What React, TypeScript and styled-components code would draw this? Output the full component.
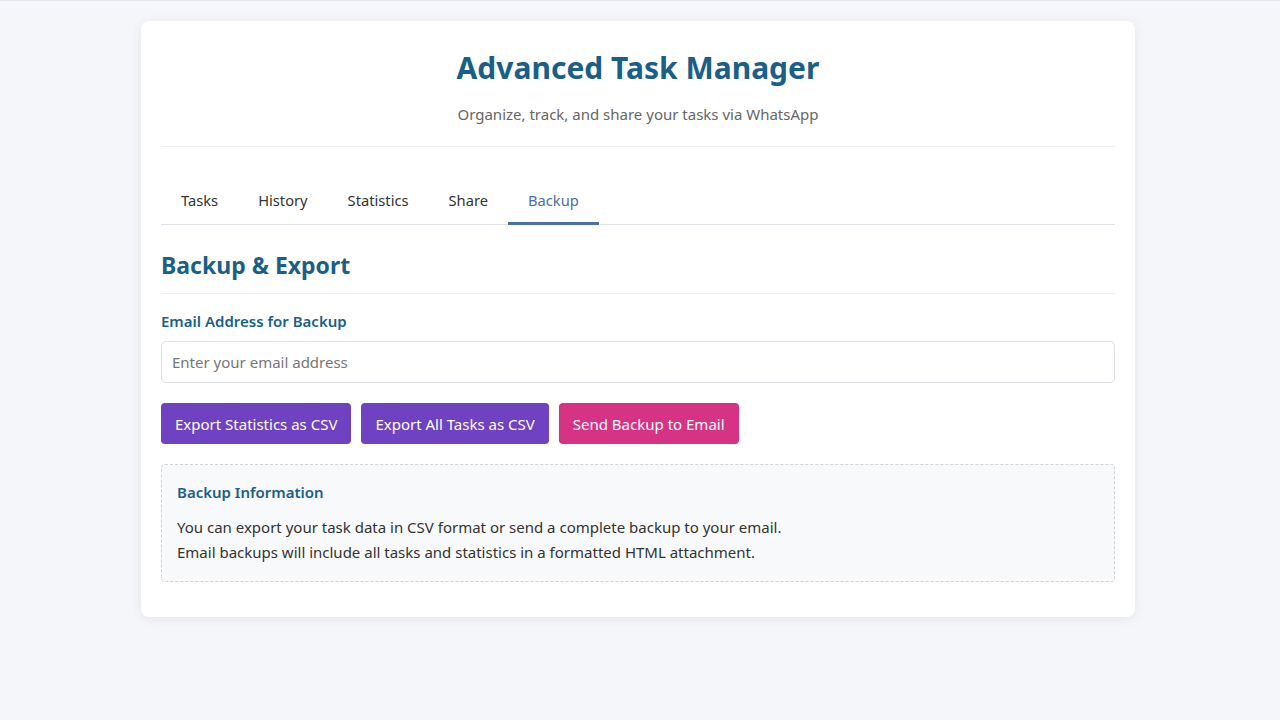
import React from 'react';
import styled, { createGlobalStyle } from 'styled-components';

const GlobalStyle = createGlobalStyle`
  * { box-sizing: border-box; }
  body {
    margin: 0;
    background: #f4f6fa;
    border-top: 1px solid #e2e5ec;
    font-family: "Noto Sans", "Open Sans", sans-serif;
    color: #333;
  }
`;

const Page = styled.div`
  padding: 20px 0 40px;
`;

const Card = styled.main`
  width: 994px;
  margin: 0 auto;
  transform: translateX(-2px);
  background: #fff;
  border-radius: 8px;
  box-shadow: 0 2px 12px rgba(0, 0, 0, 0.07);
  padding: 20px 20px 35px;
`;

const Header = styled.header`
  text-align: center;
  padding: 7px 0 22px;
  border-bottom: 1px solid #eceef1;
`;

const Title = styled.h1`
  margin: 0;
  font-size: 30px;
  font-weight: 700;
  color: #1a5f88;
  line-height: 1.3;
`;

const Subtitle = styled.p`
  margin: 17px 0 0;
  font-size: 15px;
  color: #666;
`;

const TabBar = styled.nav`
  display: flex;
  margin-top: 31px;
  border-bottom: 1px solid #dfe2e6;
`;

const Tab = styled.button<{ $active?: boolean }>`
  background: none;
  border: 0;
  border-bottom: 3px solid ${p => (p.$active ? '#4a6fa5' : 'transparent')};
  margin-bottom: -1px;
  padding: 12px 20px 12px;
  font-family: inherit;
  font-size: 14.7px;
  color: ${p => (p.$active ? '#4a6fa5' : '#333')};
  cursor: pointer;
`;

const SectionTitle = styled.h2`
  margin: 24px 0 0;
  padding-bottom: 12px;
  border-bottom: 1px solid #eceef1;
  font-size: 23px;
  font-weight: 700;
  color: #1a5f88;
`;

const Field = styled.div`
  margin-top: 17px;
  display: flex;
  flex-direction: column;
  gap: 10px;
`;

const Label = styled.label`
  font-size: 15px;
  font-weight: 600;
  color: #1a5f88;
`;

const Input = styled.input`
  height: 42px;
  padding: 0 10px;
  border: 1px solid #dcdfe3;
  border-radius: 5px;
  font-family: inherit;
  font-size: 15px;
  color: #333;
  &::placeholder { color: #777; }
`;

const Actions = styled.div`
  display: flex;
  gap: 10px;
  margin-top: 20px;
`;

const Button = styled.button<{ $tone: 'purple' | 'pink' }>`
  height: 41px;
  padding: 0 14px;
  border: 0;
  border-radius: 4px;
  background: ${p => (p.$tone === 'pink' ? '#d63384' : '#6f42c1')};
  color: #fff;
  font-family: inherit;
  font-size: 15px;
  cursor: pointer;
`;

const InfoBox = styled.section`
  margin-top: 20px;
  padding: 17px 15px 16px;
  background: #f8f9fa;
  border: 1px dashed #d0d3d8;
  border-radius: 4px;
`;

const InfoTitle = styled.h3`
  margin: 0 0 13px;
  font-size: 15px;
  font-weight: 600;
  color: #1a5f88;
`;

const InfoText = styled.p`
  margin: 0;
  font-size: 15px;
  line-height: 25px;
  color: #333;
`;

export default function App() {
  const tabs = ['Tasks', 'History', 'Statistics', 'Share', 'Backup'];
  return (
    <Page>
      <GlobalStyle />
      <Card>
        <Header>
          <Title>Advanced Task Manager</Title>
          <Subtitle>Organize, track, and share your tasks via WhatsApp</Subtitle>
        </Header>
        <TabBar>
          {tabs.map(t => (
            <Tab key={t} $active={t === 'Backup'}>{t}</Tab>
          ))}
        </TabBar>
        <SectionTitle>Backup &amp; Export</SectionTitle>
        <Field>
          <Label htmlFor="email">Email Address for Backup</Label>
          <Input id="email" type="email" placeholder="Enter your email address" />
        </Field>
        <Actions>
          <Button $tone="purple">Export Statistics as CSV</Button>
          <Button $tone="purple">Export All Tasks as CSV</Button>
          <Button $tone="pink">Send Backup to Email</Button>
        </Actions>
        <InfoBox>
          <InfoTitle>Backup Information</InfoTitle>
          <InfoText>
            You can export your task data in CSV format or send a complete backup to your email.
            <br />
            Email backups will include all tasks and statistics in a formatted HTML attachment.
          </InfoText>
        </InfoBox>
      </Card>
    </Page>
  );
}
